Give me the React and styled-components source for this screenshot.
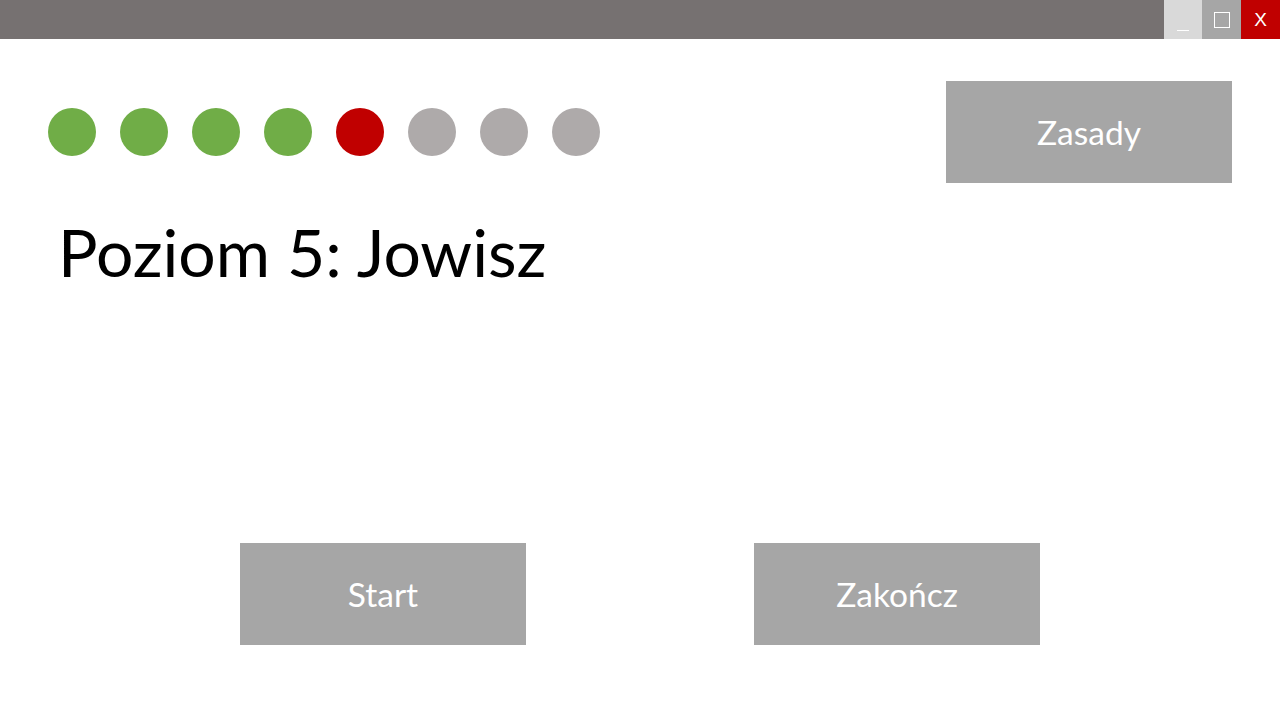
import React from 'react';
import styled, { createGlobalStyle } from 'styled-components';

const colors = {
  bar: '#767171',
  minimize: '#d9d9d9',
  maximize: '#a6a6a6',
  close: '#c00000',
  done: '#70ad47',
  current: '#c00000',
  todo: '#aeaaaa',
  button: '#a6a6a6',
};

const GlobalStyle = createGlobalStyle`
  html, body {
    margin: 0;
    padding: 0;
    background: #fff;
    font-family: Lato, "Open Sans", sans-serif;
  }
`;

const Window = styled.div`
  width: 1280px;
  height: 720px;
  display: flex;
  flex-direction: column;
  overflow: hidden;
`;

const TitleBar = styled.div`
  height: 39px;
  background: ${colors.bar};
  display: flex;
  justify-content: flex-end;
`;

const WindowButton = styled.div`
  width: ${(p) => p.$width || 39}px;
  height: 39px;
  background: ${(p) => p.$bg};
  display: flex;
  align-items: center;
  justify-content: center;
  color: #fff;
  font-family: "Liberation Sans", sans-serif;
  font-size: 19px;
`;

const MinimizeLine = styled.span`
  width: 12px;
  height: 1px;
  background: #fff;
  margin-top: 22px;
`;

const MaximizeBox = styled.span`
  width: 16px;
  height: 16px;
  box-sizing: border-box;
  border: 1px solid #fff;
`;

const Content = styled.div`
  flex: 1;
  display: flex;
  flex-direction: column;
  padding: 42px 48px 0 48px;
`;

const TopRow = styled.div`
  display: flex;
  align-items: center;
  justify-content: space-between;
`;

const Dots = styled.div`
  display: flex;
  gap: 24px;
`;

const Dot = styled.span`
  width: 48px;
  height: 48px;
  border-radius: 50%;
  background: ${(p) => colors[p.$state]};
`;

const Button = styled.div`
  width: 286px;
  height: 102px;
  background: ${colors.button};
  color: #fff;
  display: flex;
  align-items: center;
  justify-content: center;
  font-size: 33.5px;
`;

const Title = styled.h1`
  margin: 29px 0 0 10px;
  font-weight: 400;
  font-size: 66px;
  line-height: 80px;
  color: #000;
`;

const BottomRow = styled.div`
  margin-top: auto;
  margin-bottom: 75px;
  display: flex;
  justify-content: center;
  gap: 228px;
  margin-left: -48px;
  margin-right: -48px;
`;

const levels = ['done', 'done', 'done', 'done', 'current', 'todo', 'todo', 'todo'];

export default function App() {
  return (
    <Window>
      <GlobalStyle />
      <TitleBar>
        <WindowButton $bg={colors.minimize} $width={38}>
          <MinimizeLine />
        </WindowButton>
        <WindowButton $bg={colors.maximize}>
          <MaximizeBox />
        </WindowButton>
        <WindowButton $bg={colors.close}>X</WindowButton>
      </TitleBar>
      <Content>
        <TopRow>
          <Dots>
            {levels.map((state, i) => (
              <Dot key={i} $state={state} />
            ))}
          </Dots>
          <Button>Zasady</Button>
        </TopRow>
        <Title>Poziom 5: Jowisz</Title>
        <BottomRow>
          <Button>Start</Button>
          <Button>Zakończ</Button>
        </BottomRow>
      </Content>
    </Window>
  );
}
